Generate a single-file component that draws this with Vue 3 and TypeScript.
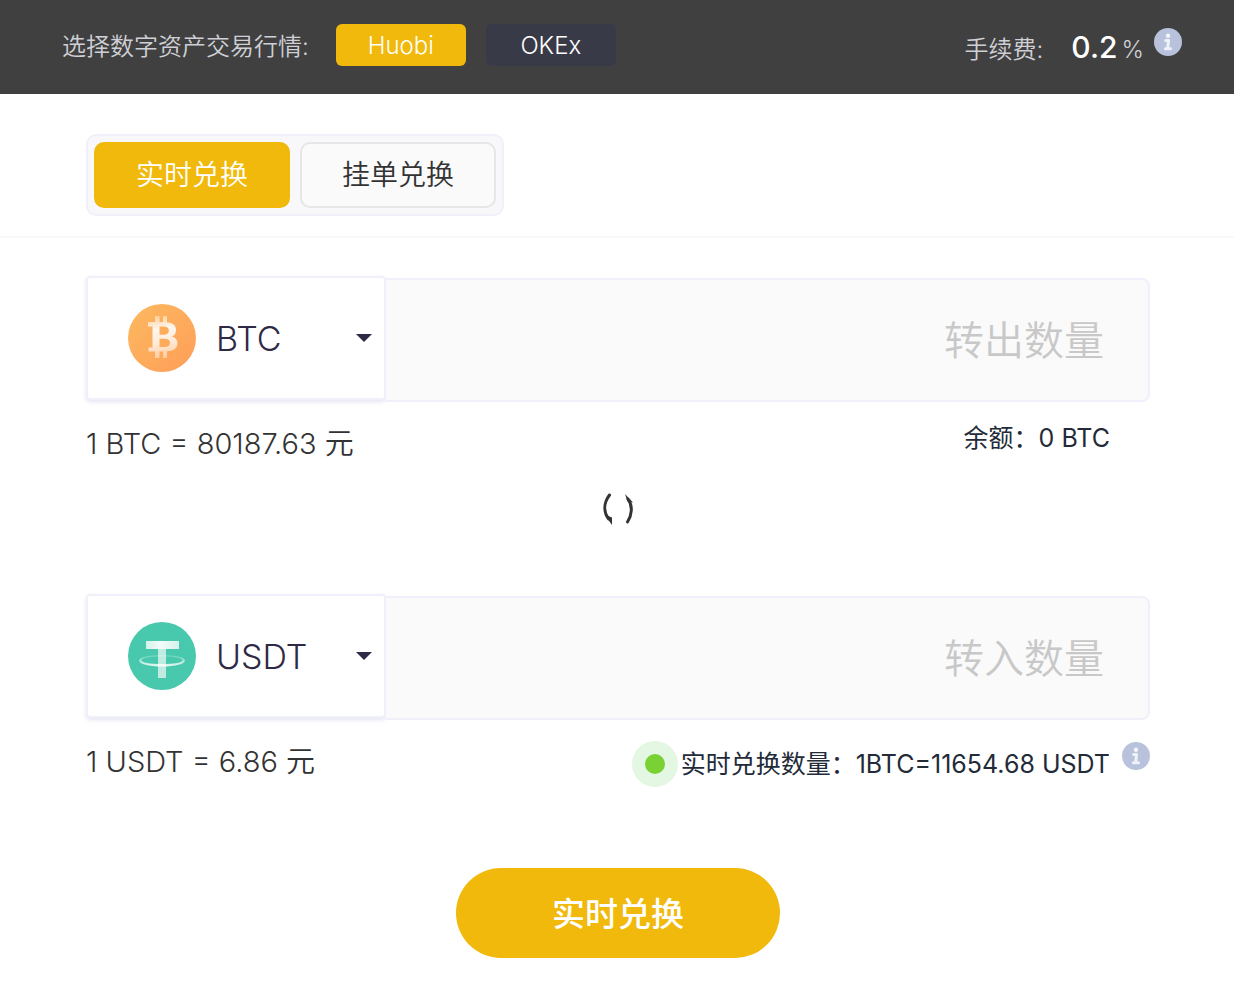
<script setup lang="ts">
import { ref } from 'vue'

type Mode = 'instant' | 'limit'

const markets: string[] = ['Huobi', 'OKEx']
const market = ref<string>('Huobi')
const mode = ref<Mode>('instant')
const tabs: { id: Mode; label: string }[] = [
  { id: 'instant', label: '实时兑换' },
  { id: 'limit', label: '挂单兑换' },
]

const fromCoin = ref<string>('BTC')
const toCoin = ref<string>('USDT')
const fromAmount = ref<string>('')
const toAmount = ref<string>('')

function swap(): void {
  const coin = fromCoin.value
  fromCoin.value = toCoin.value
  toCoin.value = coin
}
</script>

<template>
  <div class="page">
    <header class="topbar">
      <span class="topbar-label">选择数字资产交易行情:</span>
      <div class="markets">
        <button
          v-for="name in markets"
          :key="name"
          type="button"
          class="market"
          :class="{ active: market === name }"
          @click="market = name"
        >{{ name }}</button>
      </div>
      <div class="fee">
        <span>手续费:</span>
        <span class="fee-value">0.2</span>
        <span>%</span>
      </div>
      <svg class="info" viewBox="0 0 28 28" role="img" aria-label="手续费说明">
        <circle cx="14" cy="14" r="14" fill="#b9c2dc" />
        <circle cx="14" cy="7.700" r="2.200" fill="#f3f5fa" />
        <path d="M11.700 12.500H14.600L13.600 20.500M11.300 20.800H16.500" fill="none" stroke="#eef1f8" stroke-width="3" stroke-linejoin="round" stroke-linecap="round" />
      </svg>
    </header>

    <nav class="tabs-bar">
      <div class="tabs">
        <button
          v-for="tab in tabs"
          :key="tab.id"
          type="button"
          class="tab"
          :class="{ active: mode === tab.id }"
          @click="mode = tab.id"
        >{{ tab.label }}</button>
      </div>
    </nav>

    <main class="exchange">
      <div class="field">
        <div class="coin">
          <svg class="coin-icon" viewBox="0 0 68 68" aria-hidden="true">
            <defs>
              <linearGradient id="btc-bg" x1="0" y1="0" x2="1" y2="1">
                <stop offset="0" stop-color="#fdb95f" />
                <stop offset="1" stop-color="#fe9e59" />
              </linearGradient>
              <linearGradient id="btc-mark" gradientUnits="userSpaceOnUse" x1="30" y1="12" x2="36" y2="54">
                <stop offset="0" stop-color="#fff" stop-opacity=".4" />
                <stop offset=".3" stop-color="#fff" stop-opacity=".9" />
                <stop offset=".65" stop-color="#fff" stop-opacity=".75" />
                <stop offset="1" stop-color="#fff" stop-opacity=".4" />
              </linearGradient>
            </defs>
            <circle cx="34" cy="34" r="34" fill="url(#btc-bg)" />
            <path
              fill="url(#btc-mark)"
              fill-rule="evenodd"
              d="M27 12H31.500V18H35V12H39V18.200C45 18.800 48 21.500 48 26C48 29.500 46.500 31.500 44 32.500C47.500 33.500 49.500 36 49.500 39.500C49.500 44 46 47 39 47.300V54H35V47.500H31.500V54H27V47.500H20.500V43.500H24.500V22.500H20V18H27ZM31.500 22.500V30.700H35.500C39 30.700 40.800 29.300 40.800 26.500C40.800 23.800 39 22.500 35.500 22.500ZM31.500 34.800V43H36.500C40 43 42 41.700 42 38.900C42 36.100 40 34.800 36.500 34.800Z"
            />
          </svg>
          <select v-model="fromCoin" class="coin-select" aria-label="转出币种">
            <option>BTC</option>
            <option>USDT</option>
          </select>
        </div>
        <input v-model="fromAmount" class="amount" type="text" placeholder="转出数量" aria-label="转出数量" />
      </div>
      <div class="meta">
        <span class="rate">1 BTC = 80187.63 元</span>
        <span class="note balance">余额：0 BTC</span>
      </div>

      <button type="button" class="swap" aria-label="互换币种" @click="swap">
        <svg viewBox="0 0 36 36" aria-hidden="true">
          <g fill="none" stroke="#333" stroke-width="3" stroke-linecap="round">
            <path d="M9.500 4C3.500 12 3.500 21 8.500 28" />
            <path d="M28 8C33 15 32 24 27.500 31" />
          </g>
          <path fill="#333" d="M4.500 23.500L12 26.500V34ZM25 3L33 11.500L27.500 10.500Z" />
        </svg>
      </button>

      <div class="field">
        <div class="coin">
          <svg class="coin-icon" viewBox="0 0 68 68" aria-hidden="true">
            <defs>
              <linearGradient id="usdt-bar" x1="0" x2="1" y1="0" y2="0">
                <stop offset="0" stop-color="#d5f2ea" />
                <stop offset=".45" stop-color="#f2fcf9" />
                <stop offset="1" stop-color="#d5f2ea" />
              </linearGradient>
              <linearGradient id="usdt-ring" x1="0" x2="0" y1="0" y2="1">
                <stop offset="0" stop-color="#fff" stop-opacity=".15" />
                <stop offset="1" stop-color="#fff" stop-opacity=".9" />
              </linearGradient>
            </defs>
            <circle cx="34" cy="34" r="34" fill="#48c8ac" />
            <path d="M30 27H38V56H30Z" fill="#c0ebe0" />
            <path d="M18 19H51V27H18Z" fill="url(#usdt-bar)" />
            <path
              fill="url(#usdt-ring)"
              fill-rule="evenodd"
              d="M34 33C47 33 57 35 57 38.500C57 42 47 44.500 34 44.500C21 44.500 11 42 11 38.500C11 35 21 33 34 33ZM34 34.500C22 34.500 13.500 36 13.500 38.200C13.500 40.400 22 42 34 42C46 42 54.500 40.400 54.500 38.200C54.500 36 46 34.500 34 34.500Z"
            />
          </svg>
          <select v-model="toCoin" class="coin-select" aria-label="转入币种">
            <option>BTC</option>
            <option>USDT</option>
          </select>
        </div>
        <input v-model="toAmount" class="amount" type="text" placeholder="转入数量" aria-label="转入数量" />
      </div>
      <div class="meta">
        <span class="rate">1 USDT = 6.86 元</span>
        <div class="live">
          <span class="pulse"></span>
          <span class="note">实时兑换数量：1BTC=11654.68 USDT</span>
          <svg class="info" viewBox="0 0 28 28" role="img" aria-label="兑换数量说明">
            <circle cx="14" cy="14" r="14" fill="#b9c2dc" />
            <circle cx="14" cy="7.700" r="2.200" fill="#f3f5fa" />
            <path d="M11.700 12.500H14.600L13.600 20.500M11.300 20.800H16.500" fill="none" stroke="#eef1f8" stroke-width="3" stroke-linejoin="round" stroke-linecap="round" />
          </svg>
        </div>
      </div>

      <button type="button" class="submit">实时兑换</button>
    </main>
  </div>
</template>

<style>
body {
  background: #fff;
}
</style>

<style scoped>
.page,
.page button,
.page select,
.page input {
  font-family: Inter, "Noto Sans CJK SC", sans-serif;
  font-weight: 350;
}

.page * {
  box-sizing: border-box;
}

button {
  padding: 0;
  border: 0;
  cursor: pointer;
}

.topbar {
  display: flex;
  height: 94px;
  padding: 24px 52px 0 62px;
  background: #404040;
  color: #cfd0d6;
  font-size: 24px;
  line-height: 42px;
}

.topbar-label {
  margin-right: 27px;
  padding-top: 2px;
}

.markets {
  display: flex;
  gap: 20px;
}

.market {
  width: 130px;
  height: 42px;
  border-radius: 6px;
  background: #393a48;
  color: #fff;
  font-size: 24px;
}

.market.active {
  background: #f0b90b;
}

.fee {
  display: flex;
  align-items: baseline;
  margin-left: auto;
  padding-top: 2px;
}

.fee-value {
  margin: 0 4px 0 28px;
  color: #fff;
  font-size: 30px;
  font-weight: 500;
}

.info {
  flex: none;
  width: 28px;
  height: 28px;
  margin: 4px 0 0 12px;
}

.topbar .info {
  margin-left: 10px;
}

.tabs-bar {
  padding: 40px 86px 20px;
  border-bottom: 2px solid #f9f9fb;
}

.tabs {
  display: inline-flex;
  vertical-align: top;
  gap: 10px;
  padding: 6px;
  border: 2px solid #f0f0fa;
  border-radius: 10px;
  background: #f8f8fa;
}

.tab {
  width: 196px;
  height: 66px;
  padding-bottom: 4px;
  border: 2px solid #e6e6e6;
  border-radius: 10px;
  background: #fafafa;
  color: #333;
  font-size: 28px;
}

.tab.active {
  border-color: #f0b90b;
  background: #f0b90b;
  color: #fff;
}

.exchange {
  display: flex;
  flex-direction: column;
  padding: 38px 84px 44px 86px;
}

.field {
  display: flex;
  height: 126px;
}

.coin {
  display: grid;
  flex: none;
  align-items: center;
  width: 300px;
  height: 124px;
  border: 2px solid #f0f0fa;
  border-radius: 4px;
  background: #fff;
  box-shadow: 0 2px 4px #e4e4f4;
}

.coin-icon {
  grid-area: 1 / 1;
  width: 68px;
  height: 68px;
  margin-left: 40px;
  pointer-events: none;
}

.coin-select {
  grid-area: 1 / 1;
  width: 100%;
  height: 100%;
  padding: 0 40px 0 128px;
  border: 0;
  appearance: none;
  background: url("data:image/svg+xml,%3Csvg xmlns='http://www.w3.org/2000/svg' width='16' height='8'%3E%3Cpath d='M0 0H16L8 8Z' fill='%232e2945'/%3E%3C/svg%3E") no-repeat right 12px center;
  color: #2e2945;
  font-size: 34px;
}

.amount {
  flex: 1;
  align-self: flex-end;
  min-width: 0;
  height: 124px;
  padding: 0 44px;
  border: 2px solid #f0f0fa;
  border-left: 0;
  border-radius: 0 8px 8px 0;
  background: #fafafa;
  color: #333;
  font-size: 40px;
  text-align: right;
}

.amount::placeholder {
  color: #c8c8c8;
  opacity: 1;
}

.meta {
  display: flex;
  justify-content: space-between;
  height: 82px;
}

.rate {
  padding-top: 22px;
  color: #333;
  font-size: 29px;
  line-height: 40px;
}

.note {
  color: #232b39;
  font-size: 25px;
  font-weight: 400;
  line-height: 46px;
}

.balance {
  padding: 13px 40px 0 0;
}

.live {
  display: flex;
  padding-top: 21px;
}

.live .info {
  margin-top: 1px;
}

.pulse {
  width: 46px;
  height: 46px;
  margin-right: 3px;
  border: 13px solid #e3f7e3;
  border-radius: 50%;
  background: #79d133;
}

.swap {
  align-self: center;
  width: 50px;
  height: 50px;
  margin-bottom: 60px;
  background: none;
}

.swap svg {
  display: block;
  width: 36px;
  height: 36px;
  margin: auto;
}

.submit {
  align-self: center;
  width: 324px;
  height: 90px;
  margin-top: 66px;
  padding-bottom: 2px;
  border-radius: 45px;
  background: #f0b90b;
  color: #fff;
}

.page .submit {
  font-size: 33px;
  font-weight: 500;
}
</style>
